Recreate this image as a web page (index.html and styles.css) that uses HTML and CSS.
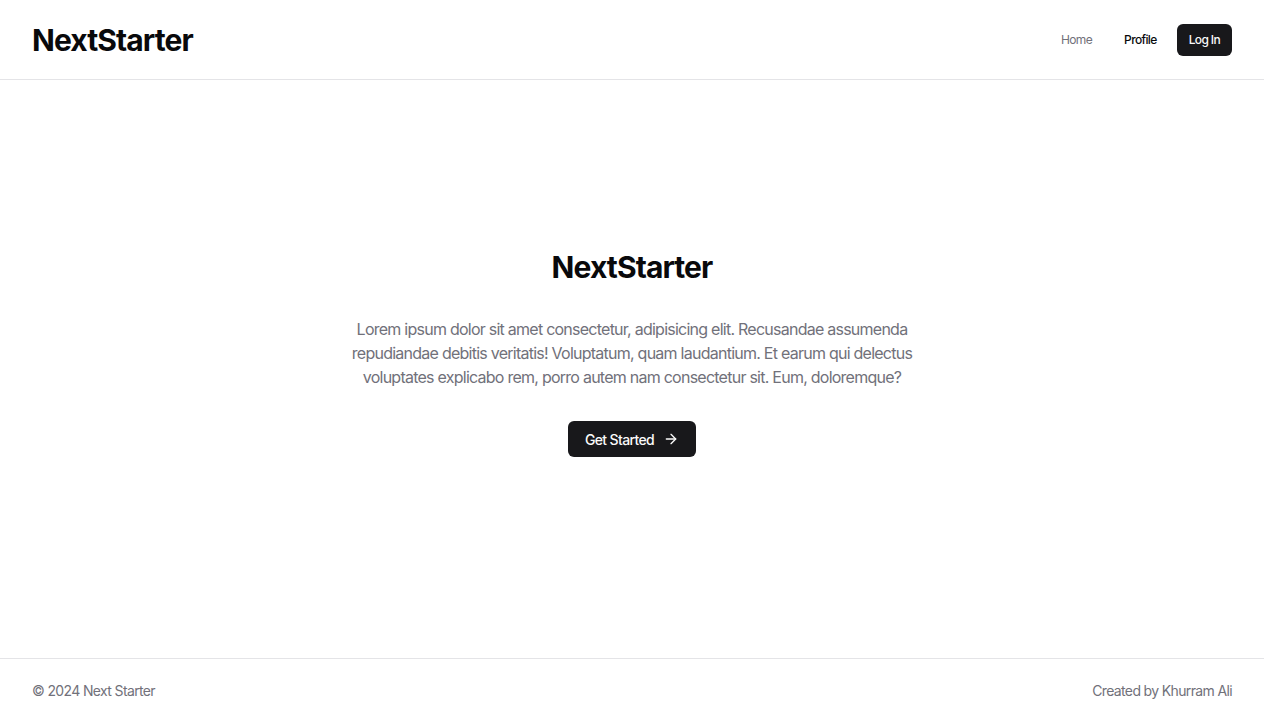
FILE: index.html
```html
<!DOCTYPE html>
<html lang="en">
<head>
<meta charset="utf-8">
<title>NextStarter</title>
<link rel="stylesheet" href="styles.css">
</head>
<body>
<div class="page">
  <header class="header">
    <a class="logo" href="#">NextStarter</a>
    <nav class="nav">
      <a class="nav-link muted" href="#">Home</a>
      <a class="nav-link" href="#">Profile</a>
      <a class="btn-login" href="#">Log In</a>
    </nav>
  </header>
  <main class="main">
    <section class="hero">
      <h1 class="hero-title">NextStarter</h1>
      <p class="hero-text">Lorem ipsum dolor sit amet consectetur, adipisicing elit. Recusandae assumenda repudiandae debitis veritatis! Voluptatum, quam laudantium. Et earum qui delectus voluptates explicabo rem, porro autem nam consectetur sit. Eum, doloremque?</p>
      <a class="btn-primary" href="#">Get Started
        <svg class="arrow" width="16" height="16" viewBox="0 0 24 24" fill="none" stroke="currentColor" stroke-width="2" stroke-linecap="round" stroke-linejoin="round"><path d="M5 12h14"/><path d="m12 5 7 7-7 7"/></svg>
      </a>
    </section>
  </main>
  <footer class="footer">
    <span>© 2024 Next Starter</span>
    <span>Created by Khurram Ali</span>
  </footer>
</div>
</body>
</html>
```
FILE: styles.css
```css
* { box-sizing: border-box; }
html, body { margin: 0; padding: 0; }
body {
  font-family: Inter, "Noto Sans", sans-serif;
  color: #09090b;
  background: #ffffff;
  letter-spacing: -0.04em;
}
a { text-decoration: none; color: inherit; }
.page {
  min-height: 722px;
  display: flex;
  flex-direction: column;
}
.header {
  height: 80px;
  border-bottom: 1px solid #e4e4e7;
  display: flex;
  align-items: center;
  justify-content: space-between;
  padding: 0 32px;
}
.logo {
  font-size: 30px;
  font-weight: 700;
  letter-spacing: -0.9px;
  color: #09090b;
}
.nav {
  display: flex;
  align-items: center;
}
.nav-link {
  font-size: 12px;
  font-weight: 500;
  color: #09090b;
  padding: 0 16px;
}
.nav-link.muted {
  color: #71717a;
  font-weight: 400;
}
.btn-login {
  margin-left: 4px;
  height: 32px;
  padding: 0 12px;
  display: flex;
  align-items: center;
  background: #18181b;
  color: #fafafa;
  font-size: 12px;
  font-weight: 500;
  border-radius: 6px;
}
.main {
  flex: 1;
  display: flex;
  align-items: center;
  justify-content: center;
  padding-bottom: 32px;
}
.hero {
  display: flex;
  flex-direction: column;
  align-items: center;
  text-align: center;
}
.hero-title {
  margin: 0;
  font-size: 30px;
  line-height: 36px;
  font-weight: 700;
  letter-spacing: -0.9px;
}
.hero-text {
  margin: 32px 0 0;
  max-width: 576px;
  font-size: 16px;
  line-height: 24px;
  letter-spacing: -0.047em;
  color: #71717a;
}
.btn-primary {
  margin-top: 32px;
  height: 36px;
  padding: 0 17px;
  display: inline-flex;
  align-items: center;
  gap: 9px;
  background: #18181b;
  color: #fafafa;
  font-size: 14px;
  font-weight: 500;
  border-radius: 6px;
}
.arrow { display: block; }
.footer {
  height: 64px;
  border-top: 1px solid #e4e4e7;
  display: flex;
  align-items: center;
  justify-content: space-between;
  padding: 0 32px;
  font-size: 14px;
  color: #71717a;
}
```
